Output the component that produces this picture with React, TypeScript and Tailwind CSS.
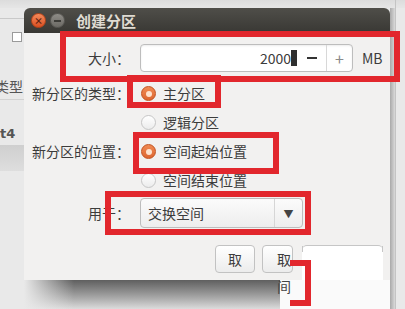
import React from 'react';

function Radio({ checked = false }: { checked?: boolean }) {
  if (checked) {
    return (
      <span className="ml-px flex h-[15px] w-[15px] shrink-0 items-center justify-center rounded-full border border-[#c2521f] bg-gradient-to-b from-[#f08a52] to-[#dd6630]">
        <span className="h-[6px] w-[6px] rounded-full bg-[#fde3cf]" />
      </span>
    );
  }
  return (
    <span className="ml-px h-[15px] w-[15px] shrink-0 rounded-full border border-[#c6c6c6] bg-gradient-to-b from-white to-[#ececec]" />
  );
}

function Label({ children }: { children: React.ReactNode }) {
  return <span className="w-[106px] shrink-0 text-right">{children}</span>;
}

function RadioRow({ label, text, checked }: { label?: string; text: string; checked?: boolean }) {
  return (
    <div className="flex h-[29px] items-center">
      <Label>{label}</Label>
      <div className="ml-[10px] flex items-center gap-[7px]">
        <Radio checked={checked} />
        <span>{text}</span>
      </div>
    </div>
  );
}

export default function App() {
  return (
    <div className="relative h-[309px] w-[405px] overflow-hidden bg-[#e9e9e9] font-['Noto_Sans_CJK_SC','Noto_Sans',sans-serif] text-[14px] text-[#3c3c3c]">
      {/* window behind the dialog */}
      <div className="absolute left-0 top-0 h-[8px] w-[405px] bg-gradient-to-b from-[#dcdcdc] to-[#e6e6e6]" />
      <div className="absolute left-0 top-[18px] h-px w-[24px] bg-[#c9c9c9]" />
      <div className="absolute left-[12px] top-[32px] h-[10px] w-[10px] border border-[#9a9a9a] bg-white" />
      <div className="absolute left-[-5px] top-[76px] leading-[20px] text-[#555]">类型</div>
      <div className="absolute left-0 top-[99px] h-px w-[24px] bg-[#d2d2d2]" />
      <div className="absolute left-0 top-[124px] font-['DejaVu_Sans',sans-serif] text-[13px] font-semibold leading-[20px] text-[#555]">t4</div>
      <div className="absolute left-0 top-[145px] h-[26px] w-[24px] bg-gradient-to-b from-[#cfcfcf] to-[#dedede]" />
      <div className="absolute left-[390px] top-[8px] h-[301px] w-[5px] bg-gradient-to-r from-[#a9a9a9] to-[#dadada]" />
      <div className="absolute left-[395px] top-0 h-[309px] w-px bg-[#c4c4c4]" />

      {/* dialog */}
      <div className="absolute left-[24px] top-[8px] w-[366px]">
        <div className="flex h-[25px] items-center rounded-t-[6px] bg-gradient-to-b from-[#4f4e49] to-[#393834] pl-[7px]">
          <span className="flex h-[15px] w-[15px] items-center justify-center rounded-full border border-[#b8441a] bg-gradient-to-b from-[#f48a5a] to-[#d94e20] text-[9px] font-bold leading-none text-[#5a2210]">
            ×
          </span>
          <span className="ml-[4px] flex h-[15px] w-[15px] items-center justify-center rounded-full border border-[#5a5955] bg-gradient-to-b from-[#8e8c87] to-[#6c6a65]">
            <span className="h-[2px] w-[7px] bg-[#3d3c38]" />
          </span>
          <span className="ml-[11px] text-[15px] font-bold leading-none text-[#dfdbd2]">创建分区</span>
        </div>

        <div className="h-[247px] bg-[#f2f1f0] pt-[11px]">
          <div className="flex h-[28px] items-center">
            <Label>大小：</Label>
            <div className="ml-[10px] flex h-[28px] w-[213px] items-center rounded-[4px] border border-[#bdbdbd] bg-white shadow-[inset_0_1px_2px_rgba(0,0,0,0.08)]">
              <div className="flex flex-1 items-center justify-end">
                <span className="leading-none">2000</span>
                <span className="h-[16px] w-[6px] bg-[#2f2f2f]" />
              </div>
              <span className="flex w-[29px] justify-center">
                <span className="h-[2px] w-[10px] bg-[#333]" />
              </span>
              <span className="flex h-full w-[26px] items-center justify-center border-l border-[#d8d8d8] text-[16px] leading-none text-[#8a8a8a]">+</span>
            </div>
            <span className="ml-[9px]">MB</span>
          </div>

          <div className="mt-[7px]">
            <RadioRow label="新分区的类型：" text="主分区" checked />
            <RadioRow text="逻辑分区" />
            <RadioRow label="新分区的位置：" text="空间起始位置" checked />
            <RadioRow text="空间结束位置" />
          </div>

          <div className="mt-[3px] flex h-[30px] items-center">
            <Label>用于：</Label>
            <div className="ml-[10px] flex h-[30px] w-[163px] items-center rounded-[4px] border border-[#bdbdbd] bg-gradient-to-b from-[#fbfbfb] to-[#ededed]">
              <span className="flex-1 pl-[7px]">交换空间</span>
              <span className="flex h-full w-[28px] items-center justify-center border-l border-[#d6d6d6] text-[10px] text-[#444]">▼</span>
            </div>
          </div>

          <div className="mt-[17px] flex h-[28px] items-start pl-[191px]">
            <button className="h-[28px] w-[40px] rounded-[4px] border border-[#c2c2c2] bg-gradient-to-b from-white to-[#ececec] text-[14px] leading-none">
              取
            </button>
            <button className="ml-[7px] h-[28px] w-[31px] rounded-[4px] border border-[#c2c2c2] bg-gradient-to-b from-white to-[#ececec] pl-[14px] text-left text-[14px] leading-none">
              取
            </button>
            <div className="relative ml-[9px] h-[35px] w-[81px] rounded-t-[5px] border-t border-[#c6c6c6] bg-white">
              <span className="absolute left-0 top-0 h-[6px] w-px bg-[#c6c6c6]" />
              <span className="absolute right-0 top-0 h-[6px] w-px bg-[#c6c6c6]" />
            </div>
          </div>
        </div>
      </div>

      {/* below the dialog */}
      <div className="absolute left-[24px] top-[280px] h-[29px] w-[256px] bg-gradient-to-b from-[#5f5f5f] via-[#9a9a9a] to-[#dcdcdc]" />
      <div className="absolute left-[24px] top-[280px] h-[29px] w-[50px] bg-gradient-to-r from-[#e9e9e9] to-transparent" />
      <div className="absolute left-[280px] top-[280px] h-[29px] w-[110px] bg-[#fafafa]" />
      <div className="absolute left-[277px] top-[276px] leading-[20px] text-[#444]">间</div>

      {/* red annotations */}
      <div className="absolute left-[60px] top-[31px] h-[51px] w-[340px] border-[6px] border-[#e2272d]" />
      <div className="absolute left-[127px] top-[75px] h-[33px] w-[94px] border-[6px] border-[#e2272d]" />
      <div className="absolute left-[133px] top-[132px] h-[42px] w-[146px] border-[6px] border-[#e2272d]" />
      <div className="absolute left-[105px] top-[191px] h-[44px] w-[206px] border-[6px] border-[#e2272d]" />
      <div className="absolute left-[290px] top-[260px] h-[46px] w-[21px] border-y-[6px] border-r-[6px] border-[#e2272d]" />
    </div>
  );
}
